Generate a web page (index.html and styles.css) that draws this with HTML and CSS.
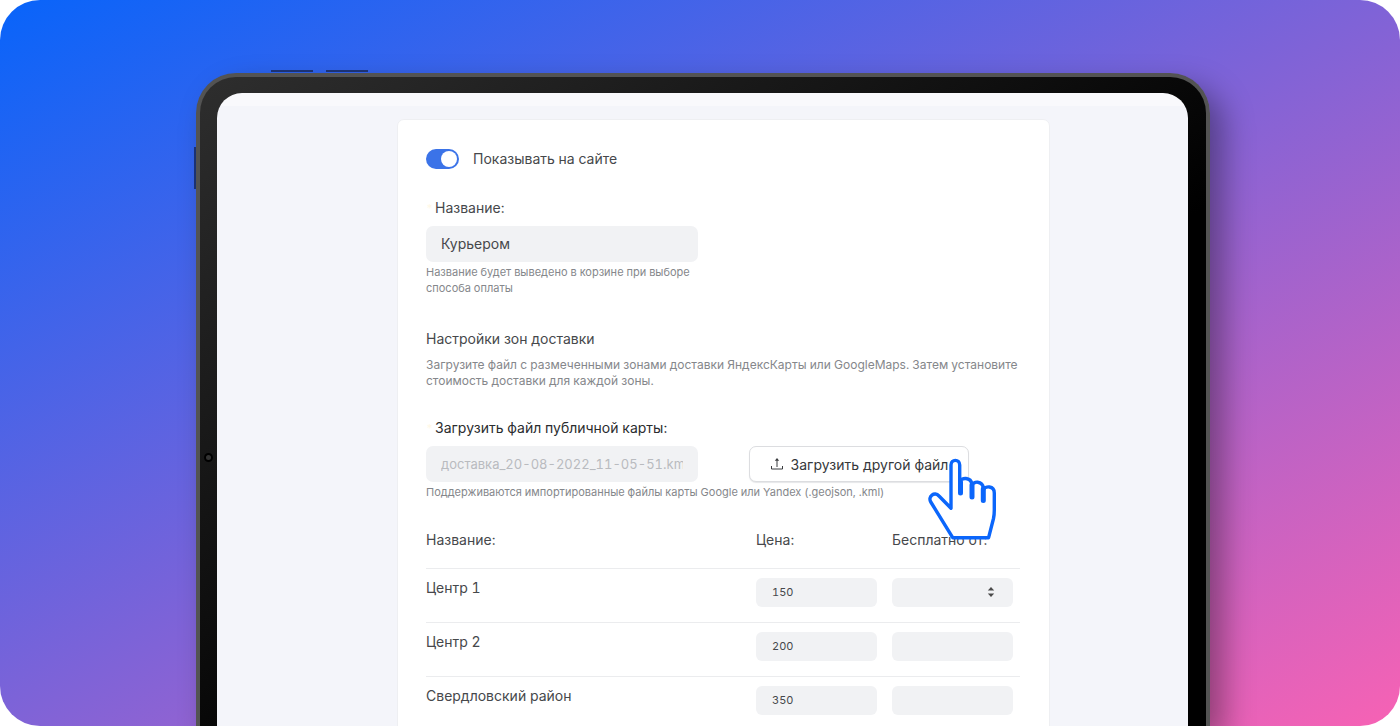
FILE: index.html
```html
<!DOCTYPE html>
<html lang="ru">
<head>
    <meta charset="UTF-8">
    <meta name="viewport" content="width=device-width, initial-scale=1">
    <title>Настройки доставки</title>
    <link rel="stylesheet" href="styles.css">
</head>
<body>
    <div class="stage">
        <div class="tablet">
            <span class="side-button volume-up"></span>
            <span class="side-button volume-down"></span>
            <span class="side-button power"></span>
            <span class="camera"></span>

            <div class="screen">
                <form class="card">
                    <label class="switch-row">
                        <input type="checkbox" class="switch" checked>
                        <span>Показывать на сайте</span>
                    </label>

                    <div class="field">
                        <label class="field-label" for="name"><span class="required">*</span>Название:</label>
                        <input type="text" id="name" class="text-input" value="Курьером">
                        <p class="hint hint-narrow">Название будет выведено в корзине при выборе способа оплаты</p>
                    </div>

                    <section class="zones-intro">
                        <h2>Настройки зон доставки</h2>
                        <p>Загрузите файл с размеченными зонами доставки ЯндексКарты или GoogleMaps. Затем установите стоимость доставки для каждой зоны.</p>
                    </section>

                    <div class="field">
                        <label class="field-label field-label-dark" for="map-file"><span class="required">*</span>Загрузить файл публичной карты:</label>
                        <div class="upload-row">
                            <input type="text" id="map-file" class="text-input file-name" value="доставка_20-08-2022_11-05-51.kml" disabled>
                            <div class="upload">
                                <button type="button" class="upload-button">
                                    <svg width="14" height="14" viewBox="0 0 14 14" fill="none" stroke="#3b3d40">
                                        <path d="M1.500 9V12H12.500V9"/>
                                        <path d="M7 10V2"/>
                                        <path d="M4.800 3.800L7 1L9.200 3.800Z" fill="#3b3d40" stroke="none"/>
                                    </svg>
                                    Загрузить другой файл
                                </button>
                                <!-- курсор-рука поверх кнопки -->
                                <svg class="hand" width="74" height="86" viewBox="0 0 74 86" fill="#fff" stroke="#0b66fb" stroke-linejoin="round" stroke-linecap="round">
                                    <path stroke-width="3.400" d="M25 52.300V9C25 2.800 33.700 2.800 33.700 9V26C35 21 45 21 45.800 28V30C47 24.600 56.500 24.600 57.300 32V34C59 29.500 68.300 29.500 68.300 37V54Q68.300 59 67.500 62.500L62.600 81.700H26.700L4.800 46C1.500 40.500 8.500 35 13 40Z"/>
                                    <path stroke-width="5" d="M34.500 26V37M46 29V41M57.300 33V44.500"/>
                                </svg>
                            </div>
                        </div>
                        <p class="hint">Поддерживаются импортированные файлы карты Google или Yandex (.geojson, .kml)</p>
                    </div>

                    <table class="zones">
                        <thead>
                            <tr>
                                <th scope="col">Название:</th>
                                <th scope="col" class="col-price">Цена:</th>
                                <th scope="col" class="col-free">Бесплатно от:</th>
                            </tr>
                        </thead>
                        <tbody>
                            <tr>
                                <td>Центр 1</td>
                                <td><input type="text" class="small-input" value="150" aria-label="Цена, Центр 1"></td>
                                <td>
                                    <div class="stepper">
                                        <input type="text" class="small-input" aria-label="Бесплатно от, Центр 1">
                                        <svg width="8" height="12" viewBox="0 0 8 12" fill="#4a4a4a">
                                            <path d="M4 1L7.200 4.500H0.800Z"/>
                                            <path d="M4 11L0.800 7.500H7.200Z"/>
                                        </svg>
                                    </div>
                                </td>
                            </tr>
                            <tr>
                                <td>Центр 2</td>
                                <td><input type="text" class="small-input" value="200" aria-label="Цена, Центр 2"></td>
                                <td><input type="text" class="small-input" aria-label="Бесплатно от, Центр 2"></td>
                            </tr>
                            <tr>
                                <td>Свердловский район</td>
                                <td><input type="text" class="small-input" value="350" aria-label="Цена, Свердловский район"></td>
                                <td><input type="text" class="small-input" aria-label="Бесплатно от, Свердловский район"></td>
                            </tr>
                        </tbody>
                    </table>
                </form>
            </div>
        </div>
    </div>
</body>
</html>
```
FILE: styles.css
```css
* {
    box-sizing: border-box;
}
body {
    margin: 0;
    background-color: white;
    color: #46484b;
    font-family: Inter, "Noto Sans", sans-serif;
    font-size: 14px;
    font-variant-numeric: tabular-nums;
    line-height: 20px;
}
h2, p {
    margin: 0;
}
.stage {
    display: flex;
    height: 100vh;
    padding: 73px 190px 0 196px;
    overflow: hidden;
    border-radius: 40px;
    background: linear-gradient(to bottom right, #0864fa, #f762b4);
}

/* Планшет */
.tablet {
    position: relative;
    flex: 1;
    padding: 16px 18px 0 17px;
    border: 4px solid #535353;
    border-bottom: none;
    border-radius: 40px 40px 0 0;
    background: linear-gradient(to bottom right, #2e2e2e, #000 60%);
    box-shadow: 14px 14px 30px rgba(0, 0, 0, 0.36);
}
.side-button {
    position: absolute;
    background-color: #1b3274;
}
.volume-up, .volume-down {
    top: -7px;
    width: 42px;
    height: 2px;
}
.volume-up {
    left: 71px;
}
.volume-down {
    left: 126px;
}
.power {
    top: 70px;
    left: -6px;
    width: 2px;
    height: 42px;
}
.camera {
    position: absolute;
    top: 376px;
    left: 4px;
    width: 9px;
    height: 9px;
    border: 2px solid #000;
    border-radius: 50%;
    background-color: #333;
}
.screen {
    height: 100%;
    padding: 26px 138px 0 180px;
    overflow: hidden;
    border-radius: 25px 25px 0 0;
    background: linear-gradient(#f9f9fc 13px, #f4f5fa 13px);
}

/* Карточка с настройками */
.card {
    min-height: 100%;
    padding: 29px 29px 28px 28px;
    border: 1px solid #eeeff2;
    border-radius: 7px;
    background-color: white;
}
.switch-row {
    display: flex;
    align-items: center;
    gap: 14px;
    margin-bottom: 29px;
}
.switch {
    appearance: none;
    width: 33px;
    height: 20px;
    margin: 0;
    padding: 2px;
    border-radius: 10px;
    background-color: #3b73e8;
}
.switch::before {
    content: "";
    display: block;
    width: 16px;
    height: 16px;
    margin-left: auto;
    border-radius: 50%;
    background-color: white;
}
.field {
    margin-bottom: 29px;
}
.field-label {
    display: flex;
    margin-bottom: 8px;
}
.field-label-dark {
    color: #2b2d2f;
}
.required {
    width: 9px;
    color: #fff8e6;
    font-size: 11px;
}
.text-input, .small-input {
    display: block;
    border: none;
    background-color: #f1f2f4;
    color: #46484b;
    font-family: inherit;
    font-variant-numeric: inherit;
}
.text-input {
    width: 272px;
    height: 36px;
    padding: 0 15px 1px;
    border-radius: 7px;
    font-size: 14px;
}
.file-name {
    color: #b9bbbf;
    font-size: 13px;
}
.hint {
    margin-top: 2px;
    color: #85878b;
    font-size: 11px;
    line-height: 16px;
}
.hint-narrow {
    width: 272px;
}
.zones-intro {
    margin: 33px 0 29px;
}
.zones-intro h2 {
    margin-bottom: 8px;
    font-size: 14px;
    font-weight: 400;
}
.zones-intro p {
    color: #85878b;
    font-size: 12px;
    line-height: 16px;
}
.upload-row {
    display: flex;
    gap: 51px;
}
.upload {
    position: relative;
}
.upload-button {
    display: flex;
    align-items: center;
    justify-content: center;
    gap: 7px;
    width: 220px;
    height: 36px;
    padding: 0;
    border: 1px solid #dcdde0;
    border-radius: 7px;
    background-color: white;
    box-shadow: 0 1px 1px #e6e7e9;
    color: #36383b;
    font-family: inherit;
    font-size: 14px;
}
.hand {
    position: absolute;
    top: 10px;
    left: 177px;
    pointer-events: none;
}

/* Таблица зон */
.zones {
    width: 100%;
    border-collapse: collapse;
    table-layout: fixed;
}
.zones th {
    padding: 1px 0 18px;
    font-weight: 400;
    text-align: left;
}
.zones td {
    height: 54px;
    padding: 9px 0 0;
    border-top: 1px solid #ebecee;
    vertical-align: top;
}
.col-price {
    width: 136px;
}
.col-free {
    width: 128px;
}
.small-input {
    width: 121px;
    height: 29px;
    padding: 0 16px 2px;
    border-radius: 6px;
    font-size: 11px;
}
.stepper {
    position: relative;
}
.stepper svg {
    position: absolute;
    top: 8px;
    left: 95px;
}
```
